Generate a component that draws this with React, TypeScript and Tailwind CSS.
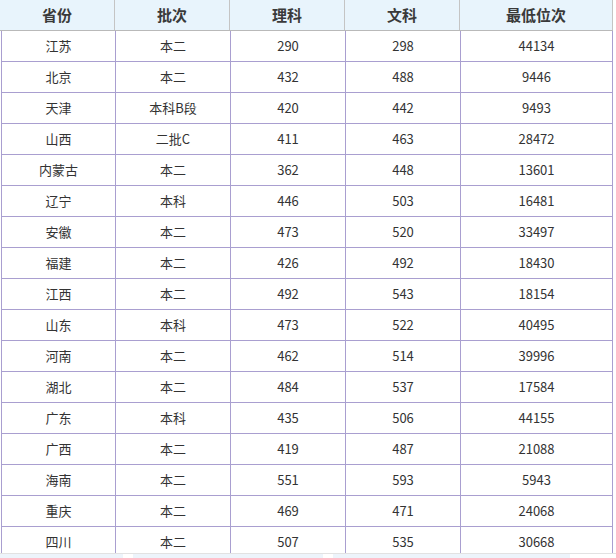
const rows = [
  ["江苏", "本二", "290", "298", "44134"],
  ["北京", "本二", "432", "488", "9446"],
  ["天津", "本科B段", "420", "442", "9493"],
  ["山西", "二批C", "411", "463", "28472"],
  ["内蒙古", "本二", "362", "448", "13601"],
  ["辽宁", "本科", "446", "503", "16481"],
  ["安徽", "本二", "473", "520", "33497"],
  ["福建", "本二", "426", "492", "18430"],
  ["江西", "本二", "492", "543", "18154"],
  ["山东", "本科", "473", "522", "40495"],
  ["河南", "本二", "462", "514", "39996"],
  ["湖北", "本二", "484", "537", "17584"],
  ["广东", "本科", "435", "506", "44155"],
  ["广西", "本二", "419", "487", "21088"],
  ["海南", "本二", "551", "593", "5943"],
  ["重庆", "本二", "469", "471", "24068"],
  ["四川", "本二", "507", "535", "30668"],
];

const headers = ["省份", "批次", "理科", "文科", "最低位次"];

const App = () => {
  return (
    <div
      className="w-[616px] h-[558px] bg-white text-[#333] overflow-hidden"
      style={{ fontFamily: '"Noto Sans CJK SC", "Liberation Sans", sans-serif' }}
    >
      <div className="h-[553px] overflow-hidden">
        {/* Header */}
        <div className="flex w-[613px] h-[31px] bg-[#e8f4fc] border-b border-[#b9b9b9] text-[15px] font-bold text-[#3a3a3a]">
          <div className="w-[115px] flex items-center justify-center border-r border-[#c4c4c4]">{headers[0]}</div>
          <div className="w-[115px] flex items-center justify-center border-r border-[#c4c4c4]">{headers[1]}</div>
          <div className="w-[115px] flex items-center justify-center border-r border-[#c4c4c4]">{headers[2]}</div>
          <div className="w-[115px] flex items-center justify-center border-r border-[#c4c4c4]">{headers[3]}</div>
          <div className="w-[153px] flex items-center justify-center border-r border-[#c4c4c4]">{headers[4]}</div>
        </div>

        {/* Body */}
        <div className="ml-[1px] w-[612px] border-l border-r border-[#a99fd0] text-[13px]">
          {rows.map((r, i) => (
            <div key={i} className="flex h-[31px] border-b border-[#a99fd0]">
              <div className="w-[114px] flex items-center justify-center border-r border-[#a99fd0]">{r[0]}</div>
              <div className="w-[115px] flex items-center justify-center border-r border-[#a99fd0]">{r[1]}</div>
              <div className="w-[115px] flex items-center justify-center border-r border-[#a99fd0]">{r[2]}</div>
              <div className="w-[115px] flex items-center justify-center border-r border-[#a99fd0]">{r[3]}</div>
              <div className="w-[151px] flex items-center justify-center">{r[4]}</div>
            </div>
          ))}
        </div>
      </div>

      {/* scrollbar strip */}
      <div className="h-[5px] border-t border-[#e2e2e2] bg-[#eef5fc] flex">
        <div className="w-[123px] bg-[#edf4fb]" />
        <div className="w-[10px] bg-white" />
        <div className="w-[190px] bg-[#edf4fb]" />
        <div className="w-[10px] bg-white" />
        <div className="w-[237px] bg-[#edf4fb]" />
        <div className="flex-1 bg-white" />
      </div>
    </div>
  );
};

export default App;
